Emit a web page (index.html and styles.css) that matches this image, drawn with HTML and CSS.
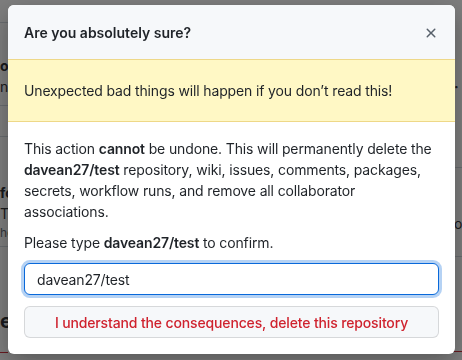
FILE: index.html
```html
<!DOCTYPE html>
<html lang="en">
<head>
<meta charset="UTF-8" />
<meta name="viewport" content="width=device-width, initial-scale=1" />
<title>Delete repository</title>
<link rel="stylesheet" href="styles.css">
</head>
<body>

<!-- Settings page behind the dialog (only the edges show) -->
<div class="page">
    <div class="gutter gutter-left">
        <div class="cell c1"></div>
        <div class="cell c2"><b>or</b><span>n</span></div>
        <div class="cell c3"></div>
        <div class="cell c4"><b>fo</b><span>T</span><small>he</small></div>
        <div class="cell c5"><b class="big">e</b></div>
    </div>
    <div class="gutter gutter-right">
        <div class="cell r1"><span class="dot">·</span></div>
        <div class="cell r3"><span>o</span></div>
        <div class="cell r4"></div>
    </div>
</div>

<!-- Dialog -->
<div class="overlay">
    <div class="dialog">
        <div class="dialog-header">
            <h3 class="dialog-title">Are you absolutely sure?</h3>
            <button class="close-btn" aria-label="Close">
                <svg width="16" height="16" viewBox="0 0 16 16" fill="currentColor"><path d="M3.72 3.72a.75.75 0 0 1 1.06 0L8 6.94l3.22-3.22a.749.749 0 0 1 1.275.326.749.749 0 0 1-.215.734L9.06 8l3.22 3.22a.749.749 0 0 1-.326 1.275.749.749 0 0 1-.734-.215L8 9.06l-3.22 3.22a.751.751 0 0 1-1.042-.018.751.751 0 0 1-.018-1.042L6.94 8 3.72 4.78a.75.75 0 0 1 0-1.06Z"></path></svg>
            </button>
        </div>

        <div class="flash-warn">Unexpected bad things will happen if you don’t read this!</div>

        <div class="dialog-body">
            <p>This action <strong>cannot</strong> be undone. This will permanently delete the <strong>davean27/test</strong> repository, wiki, issues, comments, packages, secrets, workflow runs, and remove all collaborator associations.</p>
            <p>Please type <strong>davean27/test</strong> to confirm.</p>
            <input type="text" class="confirm-input" value="davean27/test" />
            <button class="danger-btn">I understand the consequences, delete this repository</button>
        </div>
    </div>
</div>

</body>
</html>
```

FILE: styles.css
```css
body {
    margin: 0;
    background: #fff;
    font-family: Inter, "Liberation Sans", Arial, sans-serif;
    font-size: 14px;
    line-height: 1.5;
    letter-spacing: -0.14px;
    color: #1f2328;
    overflow: hidden;
}

/* Page behind */
.page {
    display: flex;
    justify-content: space-between;
    height: 360px;
}
.gutter {
    width: 8px;
    overflow: hidden;
}
.cell {
    box-sizing: border-box;
    border-bottom: 1px solid #d0d7de;
    display: flex;
    flex-direction: column;
    line-height: 21px;
}
.c1 { height: 23px; }
.c2 { height: 83px; padding-top: 32px; }
.c3 { height: 31px; }
.c4 { height: 110px; padding-top: 45px; }
.c5 { height: 106px; padding-top: 59px; border-bottom: 1px solid #cf222e; }
.gutter b { font-weight: bold; }
.gutter small { font-size: 12px; line-height: 18px; color: #57606a; }
.gutter .big { font-size: 20px; line-height: 30px; }
.r1 { height: 168px; padding-top: 76px; }
.r3 { height: 89px; padding-top: 45px; }
.r4 { height: 95px; border-bottom: 1px solid #cf222e; }
.dot { font-weight: bold; }

/* Overlay + dialog */
.overlay {
    position: fixed;
    inset: 0;
    background: rgba(20, 20, 20, 0.55);
}
.dialog {
    position: absolute;
    left: 8px;
    top: 5px;
    width: 447px;
    background: #fff;
    border-radius: 6px;
    overflow: hidden;
    box-shadow: 0 8px 24px rgba(0, 0, 0, 0.3);
}
.dialog-header {
    display: flex;
    align-items: center;
    padding: 17px 16px 16px;
    background: #f6f8fa;
}
.dialog-title {
    flex: 1;
    margin: 0;
    font-size: 14px;
    font-weight: 600;
    line-height: 21px;
    letter-spacing: 0;
}
.close-btn {
    display: flex;
    padding: 0;
    border: none;
    background: none;
    color: #57606a;
    cursor: pointer;
}
.flash-warn {
    padding: 20px 16px;
    background: #fff8c5;
    border-top: 1px solid rgba(212, 167, 44, 0.4);
    border-bottom: 1px solid rgba(212, 167, 44, 0.4);
}
.dialog-body {
    padding: 16px;
}
.dialog-body p {
    margin: 0 0 10px;
}
.dialog-body strong {
    font-weight: 600;
}
.confirm-input {
    display: block;
    box-sizing: border-box;
    width: 100%;
    height: 32px;
    padding: 5px 12px;
    font: inherit;
    letter-spacing: inherit;
    color: #1f2328;
    border: 1px solid #0969da;
    border-radius: 6px;
    outline: none;
    box-shadow: 0 0 0 3px rgba(9, 105, 218, 0.3);
}
.danger-btn {
    display: block;
    width: 100%;
    height: 32px;
    margin-top: 11px;
    font: inherit;
    font-weight: 500;
    letter-spacing: inherit;
    color: #cf222e;
    background: #f6f8fa;
    border: 1px solid rgba(31, 35, 40, 0.15);
    border-radius: 6px;
    cursor: pointer;
}
```
